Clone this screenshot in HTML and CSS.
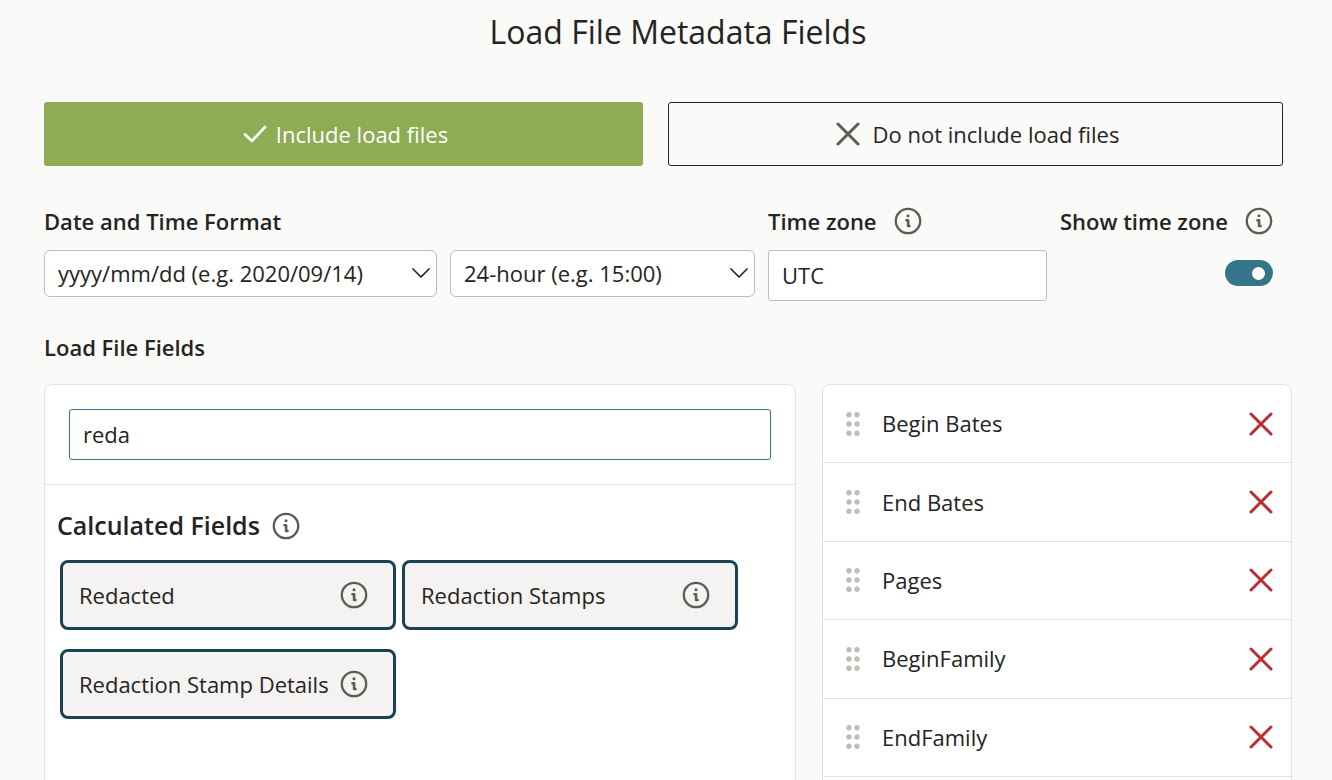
FILE: index.html
```html
<!DOCTYPE html>
<html lang="en">
<head>
    <meta charset="UTF-8">
    <meta name="viewport" content="width=device-width, initial-scale=1.0">
    <title>Load File Metadata Fields</title>
    <link rel="stylesheet" href="styles.css">
</head>
<body>
    <!-- shared icons -->
    <svg class="sprite" aria-hidden="true">
        <symbol id="icon-info" viewBox="0 0 28 28">
            <circle cx="14" cy="14" r="12.2" fill="none" stroke="currentColor" stroke-width="2.3"/>
            <circle cx="14" cy="8.7" r="1.5" fill="currentColor"/>
            <path d="M12.5 13.2h1.6v5.8h1.4" fill="none" stroke="currentColor" stroke-width="2.6" stroke-linecap="round" stroke-linejoin="round"/>
        </symbol>
        <symbol id="icon-cross" viewBox="0 0 24 24">
            <path d="M2 2l20 20M22 2L2 22" fill="none" stroke="currentColor" stroke-width="3" stroke-linecap="round"/>
        </symbol>
        <symbol id="icon-grip" viewBox="0 0 14 24">
            <g fill="currentColor">
                <circle cx="3" cy="2.8" r="2.7"/><circle cx="11" cy="2.8" r="2.7"/>
                <circle cx="3" cy="12" r="2.7"/><circle cx="11" cy="12" r="2.7"/>
                <circle cx="3" cy="21.2" r="2.7"/><circle cx="11" cy="21.2" r="2.7"/>
            </g>
        </symbol>
        <symbol id="icon-chevron" viewBox="0 0 18 12">
            <path d="M1 2l8 8 8-8" fill="none" stroke="currentColor" stroke-width="1.7" stroke-linecap="round" stroke-linejoin="round"/>
        </symbol>
    </svg>

    <main class="container">
        <h1 class="title">Load File Metadata Fields</h1>

        <div class="choices">
            <button type="button" class="choice choice-active">
                <svg class="check" viewBox="0 0 24 18"><path d="M2 9.5l7 6.5L22 2" fill="none" stroke="currentColor" stroke-width="2.6" stroke-linecap="round" stroke-linejoin="round"/></svg>
                Include load files
            </button>
            <button type="button" class="choice choice-outline">
                <svg class="cross"><use href="#icon-cross"/></svg>
                Do not include load files
            </button>
        </div>

        <div class="formats">
            <div class="format date-format">
                <label class="label" for="dateFormat">Date and Time Format</label>
                <div class="select-wrap">
                    <select id="dateFormat" class="select">
                        <option>yyyy/mm/dd (e.g. 2020/09/14)</option>
                    </select>
                    <svg class="chevron"><use href="#icon-chevron"/></svg>
                </div>
            </div>
            <div class="format">
                <div class="label"></div>
                <div class="select-wrap">
                    <select class="select" aria-label="Time format">
                        <option>24-hour (e.g. 15:00)</option>
                    </select>
                    <svg class="chevron"><use href="#icon-chevron"/></svg>
                </div>
            </div>
            <div class="format">
                <div class="label">
                    <label for="timeZone">Time zone</label>
                    <button type="button" class="info" aria-label="About time zone"><svg><use href="#icon-info"/></svg></button>
                </div>
                <input type="text" id="timeZone" class="text-input" value="UTC">
            </div>
            <div class="format">
                <div class="label">
                    <label for="showZone">Show time zone</label>
                    <button type="button" class="info" aria-label="About show time zone"><svg><use href="#icon-info"/></svg></button>
                </div>
                <input type="checkbox" id="showZone" class="toggle" role="switch" checked>
            </div>
        </div>

        <h2 class="section-title">Load File Fields</h2>

        <div class="panels">
            <section class="panel">
                <div class="search">
                    <input type="text" class="text-input search-input" aria-label="Search fields" value="reda">
                </div>
                <div class="group">
                    <h3 class="group-title">
                        Calculated Fields
                        <button type="button" class="info" aria-label="About calculated fields"><svg><use href="#icon-info"/></svg></button>
                    </h3>
                    <ul class="cards">
                        <li class="card">
                            <span>Redacted</span>
                            <button type="button" class="info" aria-label="About Redacted"><svg><use href="#icon-info"/></svg></button>
                        </li>
                        <li class="card">
                            <span>Redaction Stamps</span>
                            <button type="button" class="info" aria-label="About Redaction Stamps"><svg><use href="#icon-info"/></svg></button>
                        </li>
                        <li class="card">
                            <span>Redaction Stamp Details</span>
                            <button type="button" class="info" aria-label="About Redaction Stamp Details"><svg><use href="#icon-info"/></svg></button>
                        </li>
                    </ul>
                </div>
            </section>

            <section class="panel">
                <ul class="selected">
                    <li class="row">
                        <svg class="grip"><use href="#icon-grip"/></svg>
                        <span class="row-name">Begin Bates</span>
                        <button type="button" class="remove" aria-label="Remove Begin Bates"><svg class="cross"><use href="#icon-cross"/></svg></button>
                    </li>
                    <li class="row">
                        <svg class="grip"><use href="#icon-grip"/></svg>
                        <span class="row-name">End Bates</span>
                        <button type="button" class="remove" aria-label="Remove End Bates"><svg class="cross"><use href="#icon-cross"/></svg></button>
                    </li>
                    <li class="row">
                        <svg class="grip"><use href="#icon-grip"/></svg>
                        <span class="row-name">Pages</span>
                        <button type="button" class="remove" aria-label="Remove Pages"><svg class="cross"><use href="#icon-cross"/></svg></button>
                    </li>
                    <li class="row">
                        <svg class="grip"><use href="#icon-grip"/></svg>
                        <span class="row-name">BeginFamily</span>
                        <button type="button" class="remove" aria-label="Remove BeginFamily"><svg class="cross"><use href="#icon-cross"/></svg></button>
                    </li>
                    <li class="row">
                        <svg class="grip"><use href="#icon-grip"/></svg>
                        <span class="row-name">EndFamily</span>
                        <button type="button" class="remove" aria-label="Remove EndFamily"><svg class="cross"><use href="#icon-cross"/></svg></button>
                    </li>
                </ul>
            </section>
        </div>
    </main>
</body>
</html>
```
FILE: styles.css
```css
* {
    margin: 0;
    padding: 0;
    box-sizing: border-box;
}

body {
    height: 100vh;
    overflow: hidden;
    font-family: 'Open Sans', 'Noto Sans', sans-serif;
    font-size: 22px;
    line-height: 29px;
    color: #242422;
    background: #fafaf8;
}

button,
input,
select {
    font: inherit;
    color: inherit;
}

button {
    border: none;
    background: none;
    cursor: pointer;
}

ul {
    list-style: none;
}

.sprite {
    display: none;
}

.container {
    padding: 10px 40px 40px 44px;
}

.title {
    padding-left: 20px;
    font-size: 32px;
    font-weight: 400;
    line-height: 44px;
    text-align: center;
}

/* include / exclude */
.choices {
    display: grid;
    grid-template-columns: 599fr 615fr;
    gap: 25px;
    margin-top: 48px;
    padding-right: 9px;
}

.choice {
    display: flex;
    align-items: center;
    justify-content: center;
    height: 64px;
    border-radius: 3px;
}

.choice-active {
    gap: 9px;
    padding-left: 4px;
    background: #8dac53;
    color: #fff;
}

.choice-outline {
    gap: 13px;
    padding-left: 4px;
    border: 1px solid #242422;
}

.choice-outline .cross {
    color: #5c5b55;
}

.check {
    width: 24px;
    height: 18px;
}

.cross {
    width: 24px;
    height: 24px;
}

/* date, time and zone */
.formats {
    display: grid;
    grid-template-columns: 393fr 305fr 279fr 214fr;
    gap: 13px;
    margin-top: 40px;
    padding-right: 18px;
}

.format {
    display: flex;
    flex-direction: column;
    gap: 14px;
}

.label {
    display: flex;
    align-items: center;
    gap: 17px;
    height: 30px;
    font-weight: 600;
    white-space: nowrap;
}

.select-wrap {
    position: relative;
}

.select {
    display: block;
    width: 100%;
    height: 47px;
    padding: 0 40px 1px 13px;
    appearance: none;
    border: 1px solid #bebeb6;
    border-radius: 6px;
    background: #fff;
}

.chevron {
    position: absolute;
    top: 17px;
    right: 7px;
    width: 18px;
    height: 12px;
    pointer-events: none;
}

.text-input {
    width: 100%;
    height: 51px;
    padding: 0 13px 1px;
    border: 1px solid #bebeb6;
    border-radius: 3px;
    background: #fff;
}

.info {
    flex: none;
    width: 28px;
    height: 28px;
    color: #5c5b55;
}

.info svg {
    display: block;
    width: 28px;
    height: 28px;
}

.toggle {
    display: flex;
    align-items: center;
    align-self: flex-end;
    justify-content: flex-end;
    width: 48px;
    height: 26px;
    margin: 10px 1px 0 0;
    padding-right: 8px;
    appearance: none;
    border-radius: 13px;
    background: #347589;
}

.toggle::before {
    content: '';
    width: 13px;
    height: 13px;
    border-radius: 50%;
    background: #fff;
}

.section-title {
    margin-top: 32px;
    font-size: 22px;
    font-weight: 600;
    line-height: 29px;
}

/* field panels */
.panels {
    display: grid;
    grid-template-columns: 8fr 5fr;
    gap: 26px;
    margin-top: 22px;
}

.panel {
    padding-bottom: 24px;
    border: 1px solid #e1e1de;
    border-radius: 8px;
    background: #fff;
}

.search {
    padding: 24px;
    border-bottom: 1px solid #e1e1de;
}

.search-input {
    display: block;
    border-color: #347589;
}

.group {
    padding: 24px 12px;
}

.group-title {
    display: flex;
    align-items: center;
    gap: 12px;
    font-size: 25px;
    font-weight: 600;
    line-height: 33px;
}

.cards {
    display: flex;
    flex-wrap: wrap;
    gap: 19px 6px;
    padding: 18px 3px;
}

.card {
    display: flex;
    align-items: center;
    justify-content: space-between;
    width: 336px;
    height: 70px;
    padding: 0 25px 0 16px;
    border: 3px solid #1a4452;
    border-radius: 8px;
    background: #f4f3f2;
    white-space: nowrap;
}

.selected {
    display: grid;
    grid-auto-rows: 1fr;
    min-height: 392px;
}

.row {
    display: flex;
    align-items: center;
    padding: 0 18px 0 23px;
    border-bottom: 1px solid #e1e1de;
}

.grip {
    width: 14px;
    height: 24px;
    color: #bebeb6;
}

.row-name {
    flex: 1;
    padding-left: 22px;
}

.remove {
    width: 24px;
    height: 24px;
    color: #bb2d2f;
}

.remove .cross {
    display: block;
}
```
